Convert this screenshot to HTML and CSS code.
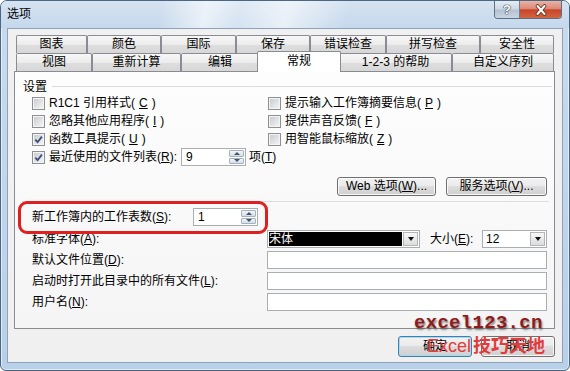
FILE: index.html
```html
<!DOCTYPE html>
<html lang="zh-CN">
<head>
  <meta charset="UTF-8" />
  <meta name="viewport" content="width=device-width, initial-scale=1.0" />
  <link rel="stylesheet" href="styles.css">
</head>
<body>

  <div class="window">
    <div class="titlebar">
      <span class="title">选项</span>
      <div class="caption">
        <span class="cap help">?</span>
        <span class="cap close">
          <svg width="14" height="12" viewBox="0 0 14 12">
            <path d="M3.5 2 L10.5 10 M10.5 2 L3.5 10" stroke="#6b2a1c" stroke-width="3.6" stroke-linecap="round" />
            <path d="M3.5 2 L10.5 10 M10.5 2 L3.5 10" stroke="#fff" stroke-width="2" stroke-linecap="round" />
          </svg>
        </span>
      </div>
    </div>

    <div class="client">
      <div class="tabs">
        <div class="tab-row row-back">
          <span class="tab">图表</span>
          <span class="tab">颜色</span>
          <span class="tab">国际</span>
          <span class="tab">保存</span>
          <span class="tab">错误检查</span>
          <span class="tab">拼写检查</span>
          <span class="tab">安全性</span>
        </div>
        <div class="tab-row row-front">
          <span class="tab">视图</span>
          <span class="tab">重新计算</span>
          <span class="tab">编辑</span>
          <span class="tab active">常规</span>
          <span class="tab">1-2-3 的帮助</span>
          <span class="tab">自定义序列</span>
        </div>
      </div>

      <div class="panel">
        <div class="group-title"><span>设置</span></div>

        <div class="checks">
          <label class="check"><span class="cb"></span>R1C1 引用样式(<u>C</u>)</label>
          <label class="check"><span class="cb"></span>提示输入工作簿摘要信息(<u>P</u>)</label>
          <label class="check"><span class="cb"></span>忽略其他应用程序(<u>I</u>)</label>
          <label class="check"><span class="cb"></span>提供声音反馈(<u>F</u>)</label>
          <label class="check"><span class="cb on"><svg width="11" height="11" viewBox="0 0 11 11"><path d="M2.3 5.6 L4.6 8.2 L8.9 2.6" fill="none" stroke="#3b4f7c" stroke-width="1.8" /></svg></span>函数工具提示(<u>U</u>)</label>
          <label class="check"><span class="cb"></span>用智能鼠标缩放(<u>Z</u>)</label>
          <div class="check">
            <span class="cb on"><svg width="11" height="11" viewBox="0 0 11 11"><path d="M2.3 5.6 L4.6 8.2 L8.9 2.6" fill="none" stroke="#3b4f7c" stroke-width="1.8" /></svg></span>
            <span class="recent-text">最近使用的文件列表(<u>R</u>):</span>
            <div class="spin"><span class="val">9</span><span class="arrows"><i class="up"></i><i class="down"></i></span></div>
            <span class="unit">项(<u>T</u>)</span>
          </div>
        </div>

        <div class="option-buttons">
          <button class="btn web">Web 选项(<u>W</u>)...</button>
          <button class="btn service">服务选项(<u>V</u>)...</button>
        </div>

        <div class="separator"></div>

        <div class="sheet-count">
          <span class="sheet-label">新工作簿内的工作表数(<u>S</u>):</span>
          <div class="spin"><span class="val">1</span><span class="arrows"><i class="up"></i><i class="down"></i></span></div>
        </div>

        <div class="fields">
          <span>标准字体(<u>A</u>):</span>
          <div class="font-row">
            <div class="combo font"><span class="sel">宋体</span><span class="drop"></span></div>
            <span class="size-label">大小(<u>E</u>):</span>
            <div class="combo size"><span class="val">12</span><span class="drop"></span></div>
          </div>
          <span>默认文件位置(<u>D</u>):</span>
          <div class="input"></div>
          <span>启动时打开此目录中的所有文件(<u>L</u>):</span>
          <div class="input"></div>
          <span>用户名(<u>N</u>):</span>
          <div class="input"></div>
        </div>
      </div>

      <div class="dialog-buttons">
        <button class="btn dlg default">确定</button>
        <button class="btn dlg">取消</button>
      </div>
    </div>

    <div class="highlight"></div>
    <div class="watermark wm-site">excel123.cn</div>
    <div class="watermark wm-name">Excel<b>技巧天地</b></div>
  </div>

</body>
</html>
```

FILE: styles.css
```css
* {
  box-sizing: border-box;
}

body {
  margin: 0;
  background: #fff;
  font-family: "Liberation Sans", "Noto Sans CJK SC", sans-serif;
  font-size: 12px;
  line-height: 14px;
  color: #000;
}

/* window frame */
.window {
  position: relative;
  width: 570px;
  height: 371px;
  padding: 0 6px 7px;
  border: 1px solid #4a6784;
  border-radius: 7px 7px 6px 6px;
  background: linear-gradient(#c9dbee, #b9d0e9);
  box-shadow: inset 0 0 0 1px rgba(255, 255, 255, 0.55);
  display: flex;
  flex-direction: column;
  overflow: hidden;
}

.titlebar {
  height: 27px;
  margin: 0 -6px;
  padding: 0 7px 0 6px;
  display: flex;
  align-items: flex-start;
  background:
    linear-gradient(100deg, rgba(255, 255, 255, 0) 28%, rgba(255, 255, 255, 0.6) 36%, rgba(255, 255, 255, 0.25) 42%, rgba(255, 255, 255, 0.6) 50%, rgba(255, 255, 255, 0) 61%),
    linear-gradient(#d6e3f1, #c5d8ec);
}

.title {
  margin-top: 6px;
}

.caption {
  margin-left: auto;
  display: flex;
  height: 18px;
  border: 1px solid #5d6f82;
  border-top: none;
  border-radius: 0 0 4px 4px;
  overflow: hidden;
}

.cap {
  display: flex;
  align-items: center;
  justify-content: center;
}

.help {
  width: 25px;
  border-right: 1px solid #6f7f90;
  background: linear-gradient(#e4ebf3, #cdd8e4 48%, #b3c2d2 52%, #c8d5e2);
  color: #fff;
  font-weight: bold;
  font-size: 13px;
  text-shadow: 0 0 1px #2c3a48, 0 0 1px #2c3a48, 0 0 1px #2c3a48;
}

.close {
  width: 41px;
  background: linear-gradient(#eab3a6, #dc8a76 45%, #c8442c 52%, #d4643f);
}

/* client area */
.client {
  flex: 1;
  background: #f0f0f0;
  border: 1px solid #8fa3b8;
  padding: 6px 7px 0 6px;
  display: flex;
  flex-direction: column;
}

.tab-row {
  display: flex;
  height: 18px;
  padding-left: 2px;
}

.tab {
  flex: none;
  height: 18px;
  border: 1px solid #898c95;
  border-bottom: none;
  border-radius: 2px 2px 0 0;
  background: linear-gradient(#f7f7f7, #ececec 50%, #dedede 52%, #d7d7d7);
  text-align: center;
  line-height: 16px;
  white-space: nowrap;
}

.row-back .tab:nth-child(1) { width: 71px; }
.row-back .tab:nth-child(2) { width: 74px; }
.row-back .tab:nth-child(3) { width: 75px; }
.row-back .tab:nth-child(4) { width: 74px; }
.row-back .tab:nth-child(5) { width: 76px; }
.row-back .tab:nth-child(6) { width: 94px; }
.row-back .tab:nth-child(7) { width: 74px; }

.row-front .tab:nth-child(1) { width: 76px; }
.row-front .tab:nth-child(2) { width: 89px; }
.row-front .tab:nth-child(3) { width: 78px; }
.row-front .tab:nth-child(5) { width: 113px; }
.row-front .tab:nth-child(6) { width: 102px; }

.tab.active {
  position: relative;
  z-index: 1;
  width: 84px;
  height: 21px;
  margin: -2px -2px 0;
  background: #fff;
  line-height: 18px;
}

.panel {
  height: 258px;
  border: 1px solid #898c95;
  background: linear-gradient(#fdfdfd, #f5f5f6);
  padding: 7px 7px 0 8px;
}

.group-title {
  display: flex;
  align-items: center;
  gap: 5px;
  height: 15px;
  margin-right: -5px;
}

.group-title::after {
  content: "";
  flex: 1;
  border-top: 1px solid #d5dfe5;
}

.checks {
  display: grid;
  grid-template-columns: 236px 1fr;
  grid-auto-rows: 18px;
  margin-left: 9px;
}

.check {
  display: flex;
  align-items: center;
  gap: 4px;
  white-space: nowrap;
}

.cb {
  flex: none;
  width: 13px;
  height: 13px;
  border: 1px solid #8e8f8f;
  background: linear-gradient(135deg, #c4c8ce 0%, #e6e7e9 65%, #f6f6f6 100%);
  box-shadow: inset 0 0 0 1px #f4f4f4;
  display: flex;
}

.cb svg {
  display: block;
}

.recent-text {
  width: 144px;
}

.unit {
  margin-left: -1px;
}

/* spin box */
.spin {
  flex: none;
  width: 65px;
  height: 18px;
  border: 1px solid #a9aeb3;
  background: #fff;
  display: flex;
}

.spin .val {
  flex: 1;
  padding-left: 4px;
  line-height: 16px;
}

.spin .arrows {
  width: 17px;
  padding: 1px;
  display: flex;
  flex-direction: column;
  gap: 1px;
}

.spin .arrows i {
  flex: 1;
  border: 1px solid #a7b2bf;
  border-radius: 1px;
  background: linear-gradient(#f2f5f8, #d5dde6);
  display: flex;
  align-items: center;
  justify-content: center;
}

.spin .arrows i::before {
  content: "";
  border-left: 3px solid transparent;
  border-right: 3px solid transparent;
}

.spin .up::before {
  border-bottom: 3px solid #3f5272;
}

.spin .down::before {
  border-top: 3px solid #3f5272;
}

/* buttons */
.btn {
  font: inherit;
  color: #000;
  height: 19px;
  padding: 0;
  border: 1px solid #707070;
  border-radius: 3px;
  background: linear-gradient(#f2f2f2, #ebebeb 45%, #dddddd 50%, #cfcfcf);
  box-shadow: inset 0 0 0 1px rgba(255, 255, 255, 0.8);
  line-height: 15px;
  white-space: nowrap;
}

.option-buttons {
  display: flex;
  justify-content: flex-end;
  gap: 10px;
  margin-top: 11px;
}

.btn.web {
  width: 99px;
}

.btn.service {
  width: 101px;
}

.separator {
  margin: 5px -2px 0 -1px;
  border-top: 1px solid #d5dfe5;
}

.sheet-count {
  display: flex;
  align-items: center;
  height: 18px;
  margin: 6px 0 0 9px;
}

.sheet-label {
  width: 161px;
}

.fields {
  display: grid;
  grid-template-columns: 235px 280px;
  grid-auto-rows: 18px;
  row-gap: 3px;
  align-items: center;
  margin: 4px 0 0 9px;
}

.font-row {
  display: flex;
  align-items: center;
  height: 18px;
}

.combo {
  height: 18px;
  border: 1px solid #a9aeb3;
  background: #fff;
  display: flex;
}

.combo.font {
  width: 153px;
}

.combo.font .sel {
  flex: 1;
  margin: 1px 0 1px 1px;
  background: #000;
  color: #fff;
  line-height: 14px;
}

.size-label {
  margin-left: 10px;
}

.combo.size {
  width: 65px;
  margin-left: auto;
}

.combo.size .val {
  flex: 1;
  padding-left: 3px;
  line-height: 16px;
}

.drop {
  width: 15px;
  margin: 1px;
  border: 1px solid #b2b6bb;
  background: linear-gradient(#f7f7f7, #dcdcdc);
  display: flex;
  align-items: center;
  justify-content: center;
}

.drop::before {
  content: "";
  border-left: 3.5px solid transparent;
  border-right: 3.5px solid transparent;
  border-top: 4px solid #111;
}

.input {
  height: 18px;
  border: 1px solid #a9aeb3;
  background: #fff;
}

.dialog-buttons {
  display: flex;
  justify-content: flex-end;
  gap: 9px;
  margin-top: 7px;
}

.btn.dlg {
  width: 74px;
  height: 21px;
}

.btn.default {
  border-color: #3c7fb1;
  box-shadow: inset 0 0 0 1px #a6dcf3;
}

/* overlays */
.highlight {
  position: absolute;
  left: 17px;
  top: 200px;
  width: 250px;
  height: 33px;
  border: 3px solid #e0201f;
  border-radius: 9px;
}

.watermark {
  position: absolute;
  white-space: nowrap;
  pointer-events: none;
}

.wm-site {
  left: 413px;
  top: 311px;
  font-family: "Liberation Mono", monospace;
  font-weight: bold;
  font-size: 19px;
  line-height: 22px;
  letter-spacing: 0.3px;
  color: #8f1b1b;
  text-shadow: 1px 2px 2px rgba(60, 60, 60, 0.6);
}

.wm-name {
  left: 426px;
  top: 332px;
  font-size: 18px;
  line-height: 22px;
  color: #e23b3b;
}

.wm-name b {
  margin-left: 2px;
  font-family: "Noto Sans CJK SC", sans-serif;
}
```
